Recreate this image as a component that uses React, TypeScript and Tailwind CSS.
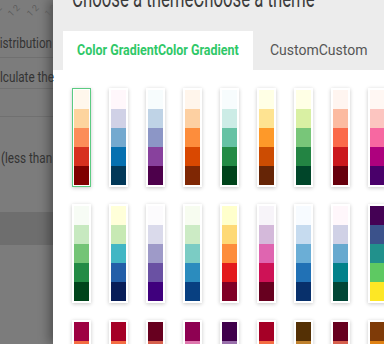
const ROWS: string[][][] = [
  [
    ['#fff7ec', '#fdd49e', '#fc8d59', '#d7301f', '#7f0000'],
    ['#fff7fb', '#d0d1e6', '#74a9cf', '#0570b0', '#023858'],
    ['#f7fcfd', '#bfd3e6', '#8c96c6', '#88419d', '#4d004b'],
    ['#fff5eb', '#fdd0a2', '#fd8d3c', '#d94801', '#7f2704'],
    ['#f7fcfd', '#ccece6', '#66c2a4', '#238b45', '#00441b'],
    ['#ffffe5', '#fee391', '#fe9929', '#cc4c02', '#662506'],
    ['#ffffe5', '#d9f0a3', '#78c679', '#238443', '#004529'],
    ['#fff5f0', '#fcbba1', '#fb6a4a', '#cb181d', '#67000d'],
    ['#fff7f3', '#fcc5c0', '#f768a1', '#ae017e', '#49006a'],
  ],
  [
    ['#f7fcf5', '#c7e9c0', '#74c476', '#238b45', '#00441b'],
    ['#ffffd9', '#c7e9b4', '#41b6c4', '#225ea8', '#081d58'],
    ['#fcfbfd', '#dadaeb', '#9e9ac8', '#6a51a3', '#3f007d'],
    ['#f7fcf0', '#ccebc5', '#7bccc4', '#2b8cbe', '#084081'],
    ['#ffffcc', '#fed976', '#fd8d3c', '#e31a1c', '#800026'],
    ['#f7f4f9', '#d4b9da', '#df65b0', '#ce1256', '#67001f'],
    ['#f7fbff', '#c6dbef', '#6baed6', '#2171b5', '#08306b'],
    ['#fff7fb', '#d0d1e6', '#67a9cf', '#02818a', '#014636'],
    ['#440154', '#3b528b', '#21918c', '#5ec962', '#fde725'],
  ],
  [
    ['#9e0142', '#f46d43', '#fee08b', '#abdda4', '#3288bd'],
    ['#a50026', '#f46d43', '#fee090', '#abd9e9', '#4575b4'],
    ['#67001f', '#d6604d', '#f7f7f7', '#92c5de', '#2166ac'],
    ['#8e0152', '#de77ae', '#f7f7f7', '#b8e186', '#4d9221'],
    ['#40004b', '#9970ab', '#f7f7f7', '#a6dba0', '#1b7837'],
    ['#a50026', '#f46d43', '#fee08b', '#a6d96a', '#1a9850'],
    ['#543005', '#bf812d', '#f5f5f5', '#80cdc1', '#01665e'],
    ['#67001f', '#d6604d', '#ffffff', '#bababa', '#4d4d4d'],
    ['#7f3b08', '#e08214', '#f7f7f7', '#b2abd2', '#542788'],
  ],
];

const font = { fontFamily: 'Roboto, "Noto Sans", sans-serif' };

function Swatch({ colors, selected }: { colors: string[]; selected?: boolean }) {
  return (
    <div
      className={`shrink-0 flex flex-col bg-white shadow-[0_1px_4px_rgba(0,0,0,0.22)] ${
        selected ? 'border border-[#5ccb82] p-px' : 'p-[2px]'
      }`}
    >
      {colors.map((c) => (
        <div key={c} className="w-[15px] h-[19px]" style={{ backgroundColor: c }} />
      ))}
    </div>
  );
}

export default function App() {
  return (
    <div className="w-[384px] h-[344px] overflow-hidden flex bg-[#7c7c7c]" style={font}>
      {/* dimmed page behind the dialog */}
      <div className="w-[53px] shrink-0 flex flex-col text-[15px] text-[#333] whitespace-nowrap">
        <div className="h-[30px] shrink-0 overflow-hidden flex gap-[6px] -ml-[4px] pt-[2px] text-[9px] leading-[9px] text-[#5c5c5c]">
          {['1 2', '1 2', '1 2', '1 2'].map((t, i) => (
            <span key={i} className="-rotate-45 mt-[2px]">
              {t}
            </span>
          ))}
        </div>
        <div className="h-[28px] shrink-0 flex items-center border-b border-[#707070]">
          <span className="-ml-[8px] origin-left scale-x-[0.78]">Distribution</span>
        </div>
        <div className="h-[31px] shrink-0 flex items-center pt-[9px] border-b border-[#707070]">
          <span className="-ml-[14px] origin-left scale-x-[0.78]">Calculate the</span>
        </div>
        <div className="h-[28px] shrink-0 border-b border-[#707070]" />
        <div className="h-[95px] shrink-0 flex items-center pl-px pb-[13px]">
          <span className="origin-left scale-x-[0.78]">(less than</span>
        </div>
        <div className="h-[33px] shrink-0 bg-[#6e6e6e]" />
        <div className="flex-1" />
      </div>

      {/* dialog */}
      <div className="flex-1 flex flex-col bg-[#ececec] shadow-[-4px_0_10px_rgba(0,0,0,0.35)]">
        <div className="h-[31px] shrink-0 flex flex-col pl-[19px] overflow-hidden">
          <div className="-mt-[13px] text-[25px] leading-[24px] text-[#3d3d3d] whitespace-nowrap origin-left scale-x-[0.67]">
            Choose a themeChoose a theme
          </div>
        </div>
        <div className="h-[39px] shrink-0 flex pl-[10px] whitespace-nowrap">
          <div className="w-[190px] bg-white flex items-center pl-[14px]">
            <span className="text-[15px] font-bold text-[#2fc868] origin-left scale-x-[0.83]">
              Color GradientColor Gradient
            </span>
          </div>
          <div className="flex items-center pl-[17px] text-[14px] text-[#555]">CustomCustom</div>
        </div>
        <div className="flex-1 min-h-0 bg-white pt-[18px] pl-[19px] flex flex-col gap-[17px]">
          {ROWS.map((row, ri) => (
            <div key={ri} className="shrink-0 flex gap-[18px]">
              {row.map((colors, ci) => (
                <Swatch key={ci} colors={colors} selected={ri === 0 && ci === 0} />
              ))}
            </div>
          ))}
        </div>
      </div>
    </div>
  );
}
